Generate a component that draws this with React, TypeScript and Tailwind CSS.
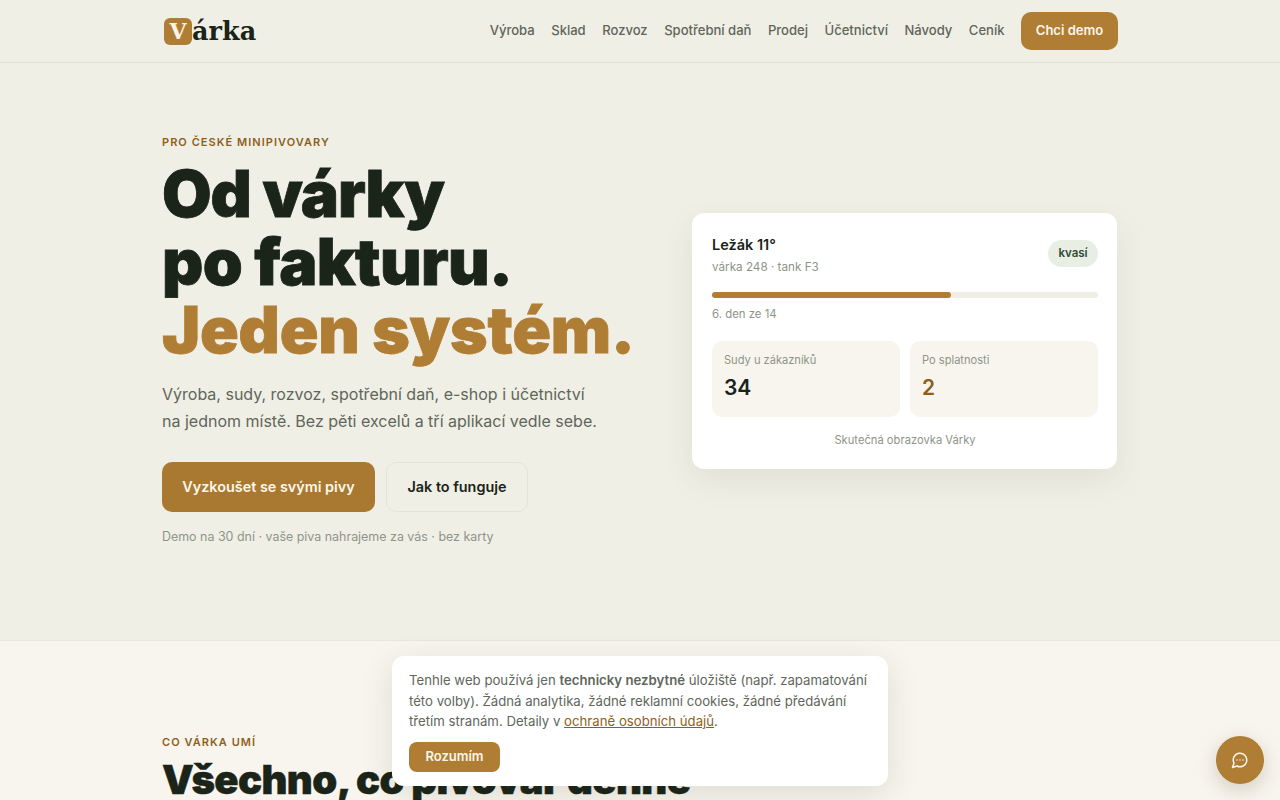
import React from "react";

const nav = ["Výroba", "Sklad", "Rozvoz", "Spotřební daň", "Prodej", "Účetnictví", "Návody", "Ceník"];

export default function App() {
  return (
    <div className="relative h-screen overflow-hidden bg-[#f0efe6] text-[#1a2419] font-['Inter','Noto_Sans',sans-serif]">
      <header className="h-[63px] border-b border-[#e1dfd3]">
        <div className="mx-auto flex h-[62px] w-[956px] items-center justify-between">
          <div className="flex items-center pl-[2px]">
            <span className="flex h-[27px] w-[28px] items-center justify-center rounded-[6px] bg-[#b07d34] font-['DejaVu_Serif',serif] text-[22px] font-bold leading-none text-[#fbf6e9]">V</span>
            <span className="pt-[1px] font-['DejaVu_Serif',serif] text-[25.5px] font-bold leading-none text-[#1a2419]">árka</span>
          </div>
          <nav className="flex items-center gap-[16.5px]">
            {nav.map((n) => (
              <a key={n} className="text-[13.05px] font-medium text-[#60665a]">{n}</a>
            ))}
            <a className="flex h-[38px] w-[97px] items-center justify-center rounded-[10px] bg-[#b07d34] text-[13.05px] font-semibold text-[#fbf6e9]">Chci demo</a>
          </nav>
        </div>
      </header>

      <section className="h-[577px]">
        <div className="mx-auto flex w-[956px] items-start justify-between">
          <div className="pt-[71px]">
            <p className="text-[11px] font-semibold leading-[16px] tracking-[1.05px] text-[#8e5f1c]">PRO ČESKÉ MINIPIVOVARY</p>
            <h1 className="mt-[10px] text-[64px] font-black leading-[68px] tracking-[-0.6px] text-[#1a2419] [-webkit-text-stroke:0.8px_currentColor]">
              <span className="tracking-[-1.1px]">Od várky</span><br />po fakturu.<br /><span className="tracking-[-0.2px] text-[#b07d34]">Jeden systém.</span>
            </h1>
            <p className="mt-[17px] text-[16px] leading-[27px] text-[#60665a]">
              Výroba, sudy, rozvoz, spotřební daň, e-shop i účetnictví<br />na jednom místě. Bez pěti excelů a tří aplikací vedle sebe.
            </p>
            <div className="mt-[27px] flex gap-[11px]">
              <a className="flex h-[50px] w-[213px] items-center justify-center rounded-[10px] bg-[#a97931] text-[14.4px] font-semibold text-[#fbf6e9]">Vyzkoušet se svými pivy</a>
              <a className="flex h-[50px] w-[142px] items-center justify-center rounded-[10px] border border-[#e5e3d8] text-[14.4px] font-semibold text-[#1a2419]">Jak to funguje</a>
            </div>
            <p className="mt-[16px] text-[12.45px] leading-[18px] text-[#8e9488]">Demo na 30 dní · vaše piva nahrajeme za vás · bez karty</p>
          </div>

          <div className="mt-[150px] mr-[1px] w-[425px] rounded-[12px] bg-white pl-[20px] pr-[19px] pt-[21px] pb-[20px] shadow-[0_12px_32px_rgba(60,60,30,0.08)]">
            <div className="flex items-start justify-between">
              <div>
                <p className="text-[14.5px] font-semibold leading-[22px] text-[#1a2419]">Ležák 11°</p>
                <p className="mt-[2px] text-[11.7px] leading-[18px] text-[#8e9488]">várka 248 · tank F3</p>
              </div>
              <span className="mt-[6px] flex h-[27px] w-[50px] items-center justify-center rounded-full bg-[#e8eee4] text-[11.5px] font-semibold text-[#2f4a35]">kvasí</span>
            </div>
            <div className="mt-[16px] h-[6px] rounded-full bg-[#f0efe4]">
              <div className="h-full w-[62%] rounded-full bg-[#b07d34]"></div>
            </div>
            <p className="mt-[7px] text-[11.4px] leading-[18px] text-[#8e9488]">6. den ze 14</p>
            <div className="mt-[18px] grid grid-cols-2 gap-[10px]">
              <div className="h-[76px] rounded-[10px] bg-[#f8f5ee] px-[12px] pt-[10px]">
                <p className="text-[11.1px] leading-[18px] text-[#8e9488]">Sudy u zákazníků</p>
                <p className="mt-[5px] text-[21px] font-semibold leading-[28px] text-[#1a2419]">34</p>
              </div>
              <div className="h-[76px] rounded-[10px] bg-[#f8f5ee] px-[12px] pt-[10px]">
                <p className="text-[11.1px] leading-[18px] text-[#8e9488]">Po splatnosti</p>
                <p className="mt-[5px] text-[21px] font-semibold leading-[28px] text-[#8e5f1c]">2</p>
              </div>
            </div>
            <p className="mt-[14px] text-center text-[11.2px] leading-[18px] text-[#8e9488]">Skutečná obrazovka Várky</p>
          </div>
        </div>
      </section>

      <section className="h-[400px] border-t border-[#e8e6da] bg-[#f8f5ee]">
        <div className="mx-auto w-[956px] pt-[93px]">
          <p className="text-[11px] font-semibold leading-[16px] tracking-[1.05px] text-[#8e5f1c]">CO VÁRKA UMÍ</p>
          <h2 className="mt-[6px] whitespace-nowrap text-[40px] font-black leading-[48px] tracking-[-0.6px] text-[#1a2419] [-webkit-text-stroke:0.5px_currentColor]">Všechno, co pivovar denně</h2>
        </div>
      </section>

      <div className="absolute left-[392px] top-[656px] w-[496px] rounded-[12px] bg-white px-[17px] pt-[14px] pb-[14px] shadow-[0_8px_32px_rgba(40,40,20,0.12)]">
        <p className="text-[13.2px] leading-[20.5px] text-[#60665a]">
          Tenhle web používá jen <strong className="font-semibold">technicky nezbytné</strong> úložiště (např. zapamatování této volby). Žádná analytika, žádné reklamní cookies, žádné předávání třetím stranám. Detaily v <a className="text-[#8e5f1c] underline">ochraně osobních údajů</a>.
        </p>
        <a className="mt-[10px] flex h-[30px] w-[91px] items-center justify-center rounded-[8px] bg-[#b07d34] text-[13px] font-semibold text-[#fbf6e9]">Rozumím</a>
      </div>

      <div className="absolute left-[1216px] top-[736px] flex h-[48px] w-[48px] items-center justify-center rounded-full bg-[#b07d34] shadow-[0_6px_20px_rgba(60,50,20,0.2)]">
        <svg width="18" height="18" viewBox="0 0 24 24" fill="none" stroke="#fbf6e9" strokeWidth="2" strokeLinecap="round" strokeLinejoin="round">
          <path d="M7.9 20A9 9 0 1 0 4 16.1L2 22Z" />
          <path d="M8 12h.01M12 12h.01M16 12h.01" />
        </svg>
      </div>
    </div>
  );
}
